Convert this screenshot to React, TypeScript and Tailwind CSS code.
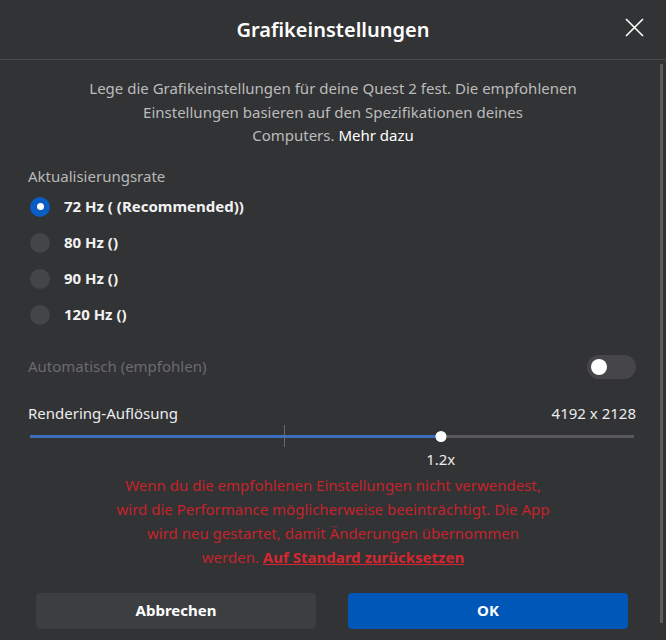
import { useState } from "react";

const rates = ["72 Hz ( (Recommended))", "80 Hz ()", "90 Hz ()", "120 Hz ()"];

function Radio(props: { checked: boolean }) {
  return props.checked ? (
    <span className="flex h-5 w-5 items-center justify-center rounded-full bg-[#0a5dc2]">
      <span className="h-[7px] w-[7px] rounded-full bg-white" />
    </span>
  ) : (
    <span className="h-5 w-5 rounded-full bg-[#444547]" />
  );
}

export default function App() {
  const [rate, setRate] = useState(0);
  const value = 68;

  return (
    <div
      className="relative h-[640px] w-[666px] overflow-hidden bg-[#323335] text-white"
      style={{ fontFamily: '"Noto Sans", "Open Sans", sans-serif' }}
    >
      {/* header */}
      <div className="relative flex h-[60px] items-center justify-center border-b border-[#49494b]">
        <h1 className="text-[20px] font-semibold">Grafikeinstellungen</h1>
        <button className="absolute right-[22px] top-[18px] text-white">
          <svg width="19" height="19" viewBox="0 0 19 19" fill="none" stroke="currentColor" strokeWidth="1.6">
            <path d="M1 1 L18 18 M18 1 L1 18" />
          </svg>
        </button>
      </div>

      {/* scrollbar */}
      <div className="absolute right-[3px] top-[64px] h-[559px] w-[3px] bg-[#5b5b5d]" />

      <div className="px-7 pt-[17px]">
        <p className="text-center text-[15px] leading-[23.5px] text-[#bcbcbc]">
          Lege die Grafikeinstellungen für deine Quest 2 fest. Die empfohlenen
          <br />
          Einstellungen basieren auf den Spezifikationen deines
          <br />
          Computers. <span className="text-white">Mehr dazu</span>
        </p>

        <div className="mt-[18px] text-[15px] leading-5 text-[#b8b8b8]">Aktualisierungsrate</div>

        <div className="mt-[3px] flex flex-col">
          {rates.map((r, i) => (
            <button
              key={r}
              onClick={() => setRate(i)}
              className="flex h-[36px] items-center gap-[14px] pl-[2px] text-left"
            >
              <Radio checked={rate === i} />
              <span className="text-[15px] font-bold text-[#f2f2f2]">{r}</span>
            </button>
          ))}
        </div>

        <div className="mt-[22px] flex h-6 items-center justify-between">
          <span className="text-[15px] text-[#6b6b6d]">Automatisch (empfohlen)</span>
          <span className="mr-[2px] flex h-6 w-[49px] items-center rounded-full bg-[#464648] pl-[4px]">
            <span className="h-4 w-4 rounded-full bg-white" />
          </span>
        </div>

        <div className="mt-6 flex items-center justify-between pr-[2px] text-[15px] leading-5 text-[#ececec]">
          <span>Rendering-Auflösung</span>
          <span>4192 x 2128</span>
        </div>

        <div className="relative mx-[2px] mt-px h-6 w-[604px]">
          <div className="absolute left-0 right-0 top-[11px] h-[3px] bg-[#59595b]" />
          <div className="absolute left-0 top-[11px] h-[3px] bg-[#3b6fbd]" style={{ width: `${value}%` }} />
          <div className="absolute left-[42%] top-[1px] h-[22px] w-px bg-[#6a6a6c]" />
          <div
            className="absolute top-[7px] h-[11px] w-[11px] -translate-x-1/2 rounded-full bg-white"
            style={{ left: `${value}%` }}
          />
        </div>
        <div className="relative mx-[2px] mt-px h-5 w-[604px] text-[15px] leading-5 text-[#ececec]">
          <span className="absolute -translate-x-1/2" style={{ left: `${value}%` }}>
            1.2x
          </span>
        </div>

        <p className="mt-1 text-center text-[15px] leading-6 text-[#c4232b]">
          Wenn du die empfohlenen Einstellungen nicht verwendest,
          <br />
          wird die Performance möglicherweise beeinträchtigt. Die App
          <br />
          wird neu gestartet, damit Änderungen übernommen
          <br />
          werden. <span className="font-bold text-[#d42730] underline">Auf Standard zurücksetzen</span>
        </p>

        <div className="ml-2 mt-6 flex w-[592px] gap-8">
          <button className="h-9 flex-1 rounded-[4px] bg-[#3d3e40] text-[15px] font-bold text-white">
            Abbrechen
          </button>
          <button className="h-9 flex-1 rounded-[4px] bg-[#0057b8] text-[15px] font-bold text-white">
            OK
          </button>
        </div>
      </div>
    </div>
  );
}
